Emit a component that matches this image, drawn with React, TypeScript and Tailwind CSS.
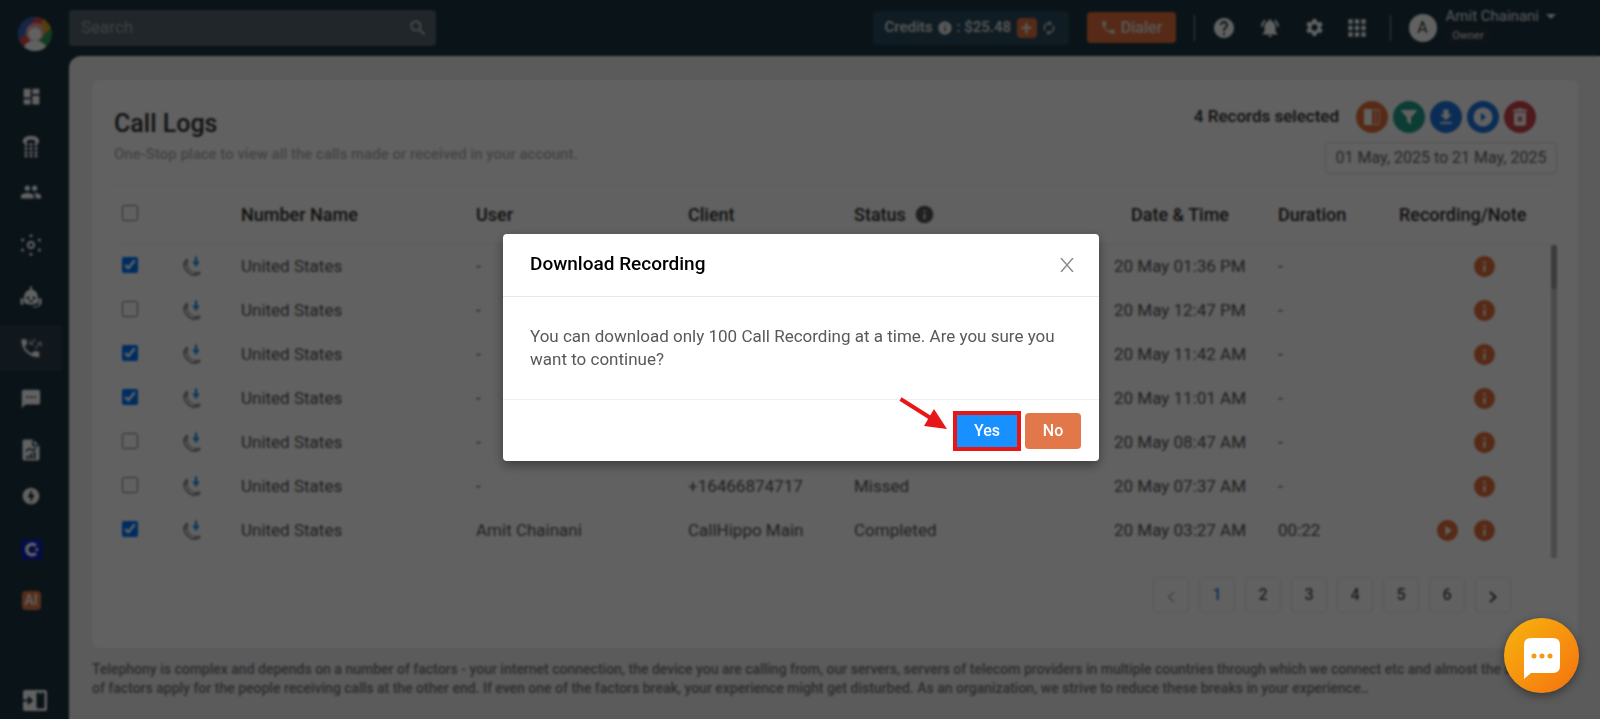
import { useState } from 'react';
import type { ReactNode } from 'react';
import {
  MdApps,
  MdArrowDropDown,
  MdAutorenew,
  MdDashboard,
  MdDownload,
  MdHelp,
  MdInfo,
  MdNotificationsActive,
  MdOfflineBolt,
  MdPeople,
  MdPhone,
  MdPlayCircleFilled,
  MdSearch,
  MdSettings,
  MdSms,
} from 'react-icons/md';

interface CallLog {
  id: number;
  user: string;
  client?: string;
  status: string;
  date: string;
  duration: string;
  recording?: boolean;
}

const LOGS: CallLog[] = [
  { id: 1, user: '-', status: 'Missed', date: '20 May 01:36 PM', duration: '-' },
  { id: 2, user: '-', client: '+16466874717', status: 'Missed', date: '20 May 12:47 PM', duration: '-' },
  { id: 3, user: '-', status: 'Missed', date: '20 May 11:42 AM', duration: '-' },
  { id: 4, user: '-', client: '+16466874717', status: 'Missed', date: '20 May 11:01 AM', duration: '-' },
  { id: 5, user: '-', client: '+16466874717', status: 'Missed', date: '20 May 08:47 AM', duration: '-' },
  { id: 6, user: '-', client: '+16466874717', status: 'Missed', date: '20 May 07:37 AM', duration: '-' },
  {
    id: 7,
    user: 'Amit Chainani',
    client: 'CallHippo Main',
    status: 'Completed',
    date: '20 May 03:27 AM',
    duration: '00:22',
    recording: true,
  },
];

function LogoIcon() {
  return (
    <svg width="34" height="34" viewBox="0 0 34 34">
      <defs>
        <clipPath id="logo-clip">
          <circle cx="17" cy="17" r="17" />
        </clipPath>
      </defs>
      <g clipPath="url(#logo-clip)">
        <rect width="34" height="34" fill="#2f9e58" />
        <path d="M0 0H19L8 14 6 18 0 24Z" fill="#3b62c4" />
        <path d="M18 -1L28 3 22 11 15 8 9 13Z" fill="#d94452" />
        <path d="M26 1L34 10 24 20 21 10Z" fill="#dfa21c" />
        <path d="M0 23L7 18 13 23 8 30 3 30Z" fill="#d94452" />
        <path d="M8 18C7 10 12 6 18 6S28 12 25 20L19 27H13Z" fill="#e9a7a3" />
        <path d="M13 22H22L20 26H14Z" fill="#e7c39b" />
        <circle cx="17" cy="17" r="6.5" fill="#fff" />
        <path d="M5 34C6 26 11 24 17 24S28 26 29 34Z" fill="#fff" />
      </g>
    </svg>
  );
}

function DialpadIcon() {
  const rows = [9.5, 13.5, 17.5, 21];
  return (
    <svg width="18" height="23" viewBox="0 0 18 23" fill="currentColor">
      <path d="M1 8C0 4 3 .8 9 .8S18 4 17 8H13V5.5C11 4.6 7 4.6 5 5.5V8Z" />
      {rows.map((y) => (
        <g key={y}>
          <circle cx="4" cy={y} r="1.6" />
          <circle cx="9" cy={y} r="1.6" />
          <circle cx="14" cy={y} r="1.6" />
        </g>
      ))}
    </svg>
  );
}

function HubIcon() {
  return (
    <svg width="22" height="22" viewBox="0 0 22 22" fill="currentColor">
      <circle cx="11" cy="11" r="3" fill="none" stroke="currentColor" strokeWidth="2" />
      <circle cx="11" cy="1.8" r="1.5" />
      <circle cx="11" cy="20.2" r="1.5" />
      <circle cx="2.6" cy="6" r="1.5" />
      <circle cx="19.4" cy="6" r="1.5" />
      <circle cx="2.6" cy="16" r="1.5" />
      <circle cx="19.4" cy="16" r="1.5" />
    </svg>
  );
}

function BotIcon() {
  return (
    <svg width="22" height="22" viewBox="0 0 22 22" fill="currentColor">
      <rect x="10" y="0" width="2" height="5" rx="1" />
      <path fillRule="evenodd" d="M11 3.5C15.500 3.500 18 7.500 18 12V15.500C18 17.500 15 18.500 11 18.500S4 17.500 4 15.500V12C4 7.500 6.500 3.500 11 3.500ZM8 10.500A1.400 1.400 0 1 0 8 13.300A1.400 1.400 0 1 0 8 10.500ZM14 10.500A1.400 1.400 0 1 0 14 13.300A1.400 1.400 0 1 0 14 10.500ZM8.500 15.200Q11 17 13.500 15.200V14.600H8.500Z" />
      <rect x="0.500" y="12" width="2.800" height="7" rx="1.400" />
      <rect x="18.700" y="12" width="2.800" height="7" rx="1.400" />
      <path d="M20 18Q19.500 21 13 21" fill="none" stroke="currentColor" strokeWidth="1.400" />
    </svg>
  );
}

function CallLogsIcon() {
  return (
    <svg width="21" height="20" viewBox="0 0 21 20" fill="currentColor">
      <path d="M3.600 8.600C5.100 11.600 7.700 14.100 10.800 15.600L13 13.300C13.300 13 13.700 12.900 14 13C15.200 13.400 16.400 13.600 17.600 13.600C18 13.600 18.300 13.900 18.300 14.300V18.400C18.300 18.800 18 19.200 17.600 19.200C8 19.200 0.300 11.400 0.300 1.900C0.300 1.500 0.600 1.200 1 1.200H4.900C5.400 1.200 5.700 1.500 5.700 1.900C5.700 3.100 5.900 4.300 6.200 5.400C6.300 5.800 6.200 6.100 6 6.300Z" />
      <path d="M14.500 1L9.500 6M9 2.500V6.500H13M14 10.500L19.500 5M16 4.500H20V8.500" fill="none" stroke="currentColor" strokeOpacity="0.700" strokeWidth="1.200" />
    </svg>
  );
}

function ReportIcon() {
  return (
    <svg width="18" height="22" viewBox="0 0 18 22">
      <path d="M2 .5H11L17.500 6.500V19.500Q17.500 21.500 15.500 21.500H2.500Q.5 21.500 .5 19.500V2Q.5 .5 2 .5Z" fill="currentColor" />
      <path d="M11 1V6.500H17" fill="none" stroke="#1a3340" strokeWidth="1.500" />
      <path d="M4 12.500Q7 8.500 9 10.500T14 8.500" fill="none" stroke="#1a3340" strokeWidth="1.500" />
      <path d="M5.500 20V16.500M9 20V14.500M12.500 20V12.500" stroke="#1a3340" strokeWidth="2" />
    </svg>
  );
}

function CopilotIcon() {
  return (
    <svg width="21" height="21" viewBox="0 0 21 21">
      <rect width="21" height="21" rx="3" fill="#0b1fc0" />
      <path d="M14.800 6.700A5.300 5.300 0 1 0 14.800 14.300" fill="none" stroke="#fff" strokeWidth="3.600" />
      <path d="M17 8.300L13.500 10.500 17 12.700Z" fill="#fff" />
    </svg>
  );
}

function ExpandIcon() {
  return (
    <svg width="24" height="21" viewBox="0 0 24 21">
      <rect x="0" y="0" width="24" height="21" rx="2" fill="currentColor" />
      <rect x="13.500" y="2.500" width="8" height="16" rx="1" fill="#1a3340" />
      <path d="M0 10.500H8M5 7L8.500 10.500 5 14" fill="none" stroke="#1a3340" strokeWidth="2.200" />
      <path d="M16 2.500H19L17.500 4.500Z" fill="currentColor" />
    </svg>
  );
}

function IncomingCallIcon() {
  return (
    <svg width="20" height="21" viewBox="0 0 20 21" fill="none">
      <path d="M2 6.500C1.500 13 7 19.300 13.500 19.300" stroke="#909090" strokeWidth="1.800" />
      <path d="M4.600 4.600L3.800 7.600M13.500 18L16.700 17.200" stroke="#909090" strokeWidth="3.600" strokeLinecap="round" />
      <path d="M5 8.500C5.700 12.300 8.500 15.500 12.300 16.600" stroke="#909090" strokeWidth="1.300" />
      <path d="M14 .5V7" stroke="#1890e8" strokeWidth="2.200" />
      <path d="M10.300 5.500H17.700L14 11Z" fill="#1890e8" />
    </svg>
  );
}

function ColumnsIcon() {
  return (
    <svg width="16" height="16" viewBox="0 0 16 16">
      <rect x="0" y="0" width="8" height="16" rx="1" fill="#fff" />
      <path d="M8 .7H15.300V15.300H8M11.500 1V15" fill="none" stroke="#fff" strokeOpacity="0.600" strokeWidth="1.200" />
    </svg>
  );
}

function FunnelIcon() {
  return (
    <svg width="16" height="16" viewBox="0 0 16 16" fill="#fff">
      <path d="M.3 1H15.700V2.300L10 8.500V15.500L6 12.500V8.500L.3 2.300Z" />
    </svg>
  );
}

function PlayRingIcon() {
  return (
    <svg width="20" height="20" viewBox="0 0 20 20">
      <circle cx="10" cy="10" r="9.500" fill="#fff" />
      <path d="M8 5.800L13 10 8 14.200Z" fill="#1f75e0" />
    </svg>
  );
}

function DeleteIcon() {
  return (
    <svg width="14" height="18" viewBox="0 0 14 18">
      <path d="M0 1.500H4L5 .3H9L10 1.500H14V3.500H0ZM1 4.500H13V16Q13 17.700 11.300 17.700H2.700Q1 17.700 1 16Z" fill="#fff" />
      <path d="M4.800 8.500L9.200 13.500M9.200 8.500L4.800 13.500" stroke="#cf444a" strokeWidth="1.600" />
    </svg>
  );
}

const NAV_ITEMS: { label: string; icon: ReactNode; className: string; active?: boolean }[] = [
  { label: 'Dashboard', icon: <MdDashboard size={21} />, className: '' },
  { label: 'Numbers', icon: <DialpadIcon />, className: 'mt-1' },
  { label: 'Teams', icon: <MdPeople size={22} />, className: '' },
  { label: 'Integrations', icon: <HubIcon />, className: 'mt-[7px]' },
  { label: 'Voice bot', icon: <BotIcon />, className: 'mt-[6px]' },
  { label: 'Call logs', icon: <CallLogsIcon />, className: 'mt-[5px]', active: true },
  { label: 'Messages', icon: <MdSms size={22} />, className: 'mt-[5px]' },
  { label: 'Reports', icon: <ReportIcon />, className: 'mt-[5px]' },
  { label: 'Power dialer', icon: <MdOfflineBolt size={20} />, className: '' },
  { label: 'Copilot', icon: <CopilotIcon />, className: 'mt-[7px]' },
  {
    label: 'AI assistant',
    icon: <span className="w-[19px] h-[19px] rounded-sm bg-[#e2794a] text-sm leading-[19px] text-center font-medium">AI</span>,
    className: 'mt-[5px]',
  },
];

function Sidebar() {
  return (
    <aside className="w-[69px] shrink-0 flex flex-col text-white">
      <a href="#" aria-label="Home" className="mt-[17px] ml-[18px] w-[34px]">
        <LogoIcon />
      </a>
      <nav className="mt-[22px] flex flex-col">
        {NAV_ITEMS.map((item) => (
          <a
            key={item.label}
            href="#"
            aria-label={item.label}
            className={`w-[62px] h-[46px] flex items-center justify-center ${item.className} ${
              item.active ? 'bg-[#2f3f4e]' : ''
            }`}
          >
            {item.icon}
          </a>
        ))}
      </nav>
      <button aria-label="Expand menu" className="mt-auto mb-2 ml-[23px] w-6">
        <ExpandIcon />
      </button>
    </aside>
  );
}

function Header() {
  return (
    <header className="h-14 shrink-0 flex items-center text-white pr-[45px] pb-px">
      <label className="w-[367px] h-9 flex items-center bg-[#56646c] rounded pl-3 pr-2">
        <input
          type="text"
          placeholder="Search"
          aria-label="Search"
          className="flex-1 min-w-0 bg-transparent outline-none text-[17px] placeholder:text-[#a3abb0]"
        />
        <MdSearch size={20} className="text-[#d0d0d0]" />
      </label>

      <div className="ml-auto flex items-center gap-1 h-[34px] w-[196px] px-3 rounded bg-[#2a4a5c] text-[15px] font-medium text-[#e6e6e6]">
        Credits
        <MdInfo size={16} />
        <span className="flex-1">: $25.48</span>
        <button aria-label="Add credits" className="w-5 h-5 rounded bg-[#e2703c] text-xl leading-5">
          +
        </button>
        <button aria-label="Refresh credits">
          <MdAutorenew size={16} />
        </button>
      </div>
      <button className="ml-[18px] w-[89px] h-[31px] flex items-center justify-center gap-1 rounded bg-[#e2703c] text-base font-medium text-[#e6e6e6]">
        <MdPhone size={17} />
        Dialer
      </button>
      <div className="ml-[18px] mr-[17px] w-px h-[26px] bg-[#9aa4ab]" />
      <div className="flex items-center gap-[23px]">
        <button aria-label="Help">
          <MdHelp size={24} />
        </button>
        <button aria-label="Notifications">
          <MdNotificationsActive size={22} />
        </button>
        <button aria-label="Settings">
          <MdSettings size={21} />
        </button>
        <button aria-label="Apps" className="-ml-1">
          <MdApps size={26} />
        </button>
      </div>
      <div className="ml-5 mr-[18px] w-px h-[26px] bg-[#9aa4ab]" />
      <div className="w-7 h-7 rounded-full bg-white text-[#333] text-base leading-7 text-center">A</div>
      <div className="ml-[9px] pb-1">
        <button className="flex items-center text-[15px] leading-5 text-[#e6e6e6]">
          Amit Chainani
          <MdArrowDropDown size={24} className="-my-1 -mr-2" />
        </button>
        <span className="block w-[45px] h-5 rounded bg-[#26343e] text-[11px] leading-5 text-center font-medium text-[#c4c4c4]">
          Owner
        </span>
      </div>
    </header>
  );
}

function CallLogTable() {
  const [selected, setSelected] = useState<number[]>([1, 3, 4, 7]);

  const toggle = (id: number) =>
    setSelected(selected.includes(id) ? selected.filter((s) => s !== id) : [...selected, id]);

  return (
    <div className="flex">
      <table className="flex-1 self-start mb-[5px] table-fixed text-[17px] text-[#555] text-left border-t border-[#f0f0f0]">
        <colgroup>
          <col className="w-[68px]" />
          <col className="w-[59px]" />
          <col className="w-[235px]" />
          <col className="w-[212px]" />
          <col className="w-[166px]" />
          <col />
          <col className="w-[164px]" />
          <col className="w-[121px]" />
          <col className="w-[152px]" />
        </colgroup>
        <thead>
          <tr className="h-[60px] border-b border-[#f0f0f0] text-[#2d2d2d] text-lg">
            <th className="pl-2">
              <input type="checkbox" aria-label="Select all" className="block w-4 h-4 mb-1" />
            </th>
            <th />
            <th className="font-medium">Number Name</th>
            <th className="font-medium">User</th>
            <th className="font-medium">Client</th>
            <th className="font-medium">
              <span className="flex items-center gap-2">
                Status
                <MdInfo size={21} className="text-[#555]" />
              </span>
            </th>
            <th className="font-medium text-center pr-8">Date &amp; Time</th>
            <th className="font-medium">Duration</th>
            <th className="font-medium whitespace-nowrap">Recording/Note</th>
          </tr>
        </thead>
        <tbody>
          {LOGS.map((log) => (
            <tr key={log.id} className="h-11">
              <td className="pl-2">
                <input
                  type="checkbox"
                  aria-label={`Select call of ${log.date}`}
                  checked={selected.includes(log.id)}
                  onChange={() => toggle(log.id)}
                  className="block w-4 h-4 mb-1"
                />
              </td>
              <td>
                <IncomingCallIcon />
              </td>
              <td>United States</td>
              <td>{log.user}</td>
              <td>{log.client}</td>
              <td>{log.status}</td>
              <td className="whitespace-nowrap">{log.date}</td>
              <td>{log.duration}</td>
              <td>
                <div className="flex justify-end gap-3 pr-[54px] text-[#e2703c]">
                  {log.recording && (
                    <button aria-label="Play recording">
                      <MdPlayCircleFilled size={25} />
                    </button>
                  )}
                  <button aria-label="Call details">
                    <MdInfo size={25} />
                  </button>
                </div>
              </td>
            </tr>
          ))}
        </tbody>
      </table>
      <div className="mt-[61px] w-[6px] bg-[#c4c4c4]">
        <div className="h-11 rounded-sm bg-[#9c9c9c]" />
      </div>
    </div>
  );
}

function Pagination() {
  const pages = [1, 2, 3, 4, 5, 6];
  const box = 'w-9 h-9 rounded border border-[#e4e4e4] flex items-center justify-center text-base font-medium';

  return (
    <nav aria-label="Pages" className="flex justify-end gap-[10px] mt-[19px] pr-[46px]">
      <button aria-label="Previous page" className={`${box} pt-1 text-[#b0b0b0]`}>
        <svg width="8" height="12" viewBox="0 0 8 12" fill="none" stroke="currentColor" strokeWidth="1.500">
          <path d="M7 1L1.500 6 7 11" />
        </svg>
      </button>
      {pages.map((page) => (
        <button key={page} className={`${box} ${page === 1 ? 'text-[#2a78e0]' : 'text-[#555]'}`}>
          {page}
        </button>
      ))}
      <button aria-label="Next page" className={`${box} pt-1 text-[#444]`}>
        <svg width="8" height="12" viewBox="0 0 8 12" fill="none" stroke="currentColor" strokeWidth="2">
          <path d="M1 1L6.500 6 1 11" />
        </svg>
      </button>
    </nav>
  );
}

function CallLogs() {
  const action = 'w-8 h-8 rounded-full flex items-center justify-center';

  return (
    <section className="bg-white rounded-md pl-[22px] pr-[21px] pb-[35px]">
      <div className="h-[104px] flex justify-between">
        <div className="pt-[28px]">
          <h1 className="text-[25px] leading-8 font-medium text-[#333]">Call Logs</h1>
          <p className="text-[15px] leading-7 font-medium text-[#b4b4b4]">
            One-Stop place to view all the calls made or received in your account.
          </p>
        </div>
        <div className="pt-[21px] flex flex-col items-end">
          <div className="flex items-center gap-[5px] pr-[21px]">
            <span className="mr-3 text-[17px] font-medium text-[#2d2d2d]">4 Records selected</span>
            <button aria-label="Columns" className={`${action} bg-[#e2703c]`}>
              <ColumnsIcon />
            </button>
            <button aria-label="Filter" className={`${action} bg-[#1fa08a]`}>
              <FunnelIcon />
            </button>
            <button aria-label="Download" className={`${action} bg-[#1f75e0] text-white`}>
              <MdDownload size={20} />
            </button>
            <button aria-label="Download recordings" className={`${action} bg-[#1f75e0]`}>
              <PlayRingIcon />
            </button>
            <button aria-label="Delete" className={`${action} bg-[#cf444a]`}>
              <DeleteIcon />
            </button>
          </div>
          <button className="mt-[9px] h-8 w-[232px] border border-[#d5d5d5] rounded text-base text-[#666] whitespace-nowrap">
            01 May, 2025 to 21 May, 2025
          </button>
        </div>
      </div>
      <CallLogTable />
      <Pagination />
    </section>
  );
}

function DownloadModal() {
  return (
    <div className="fixed inset-0 z-10 flex items-start justify-center pt-[234px] pl-[18px] pr-4 bg-black/62 backdrop-blur-[1px]">
      <div role="dialog" aria-labelledby="modal-title" className="relative w-[596px] bg-white rounded shadow-[0_4px_12px_rgba(0,0,0,0.4)]">
        <div className="h-[63px] flex items-center justify-between pl-[27px] pr-[25px] pb-px border-b border-[#e8e8e8]">
          <h2 id="modal-title" className="text-[19px] font-medium text-black">
            Download Recording
          </h2>
          <button aria-label="Close" className="text-[#8c8c8c]">
            <svg width="14" height="14" viewBox="0 0 14 14" fill="none" stroke="currentColor" strokeWidth="1.500">
              <path d="M1 0L13 14M13 0L1 14" />
            </svg>
          </button>
        </div>
        <p className="px-[27px] pt-[28px] pb-[28px] text-[17px] leading-[23px] text-[#595959]">
          You can download only 100 Call Recording at a time. Are you sure you
          <br />
          want to continue?
        </p>
        <div className="flex items-center justify-end gap-1 pt-[11px] pb-[10px] pr-[18px] border-t border-[#f0f0f0] text-base font-medium text-white">
          <button className="w-[68px] h-10 bg-[#1890ff] border-4 border-[#e81717]">Yes</button>
          <button className="w-14 h-9 rounded bg-[#e2784a]">No</button>
        </div>
        <svg width="50" height="34" viewBox="0 0 50 34" className="absolute right-[150px] bottom-[30px]" aria-hidden="true">
          <path d="M1.500 2L34 22.500" stroke="#e81717" strokeWidth="4" />
          <path d="M35 12L48 32 25 29Z" fill="#e81717" />
        </svg>
      </div>
    </div>
  );
}

function ChatButton() {
  return (
    <button
      aria-label="Open chat"
      className="fixed z-20 right-[21px] bottom-[26px] w-[75px] h-[75px] rounded-full flex items-center justify-center bg-linear-to-br from-[#f6b40e] to-[#f4700f] shadow-[0_3px_10px_rgba(0,0,0,0.4)]"
    >
      <svg width="36" height="42" viewBox="0 0 36 42" className="mt-[7px]">
        <path d="M7 0H29Q36 0 36 7V28Q36 35 29 35H7L0 41V7Q0 0 7 0Z" fill="#fff" />
        <circle cx="10" cy="18" r="2.500" fill="#f39a10" />
        <circle cx="18" cy="18" r="2.500" fill="#f39a10" />
        <circle cx="26" cy="18" r="2.500" fill="#f39a10" />
      </svg>
    </button>
  );
}

export default function App() {
  return (
    <div className="min-h-screen flex bg-[#1a3340] font-['Roboto',sans-serif]">
      <Sidebar />
      <div className="flex-1 min-w-0 flex flex-col">
        <Header />
        <main className="flex-1 bg-[#eeeef2] rounded-tl-xl pt-6 pl-[23px] pr-[22px]">
          <CallLogs />
          <p className="mt-3 text-sm leading-[19px] font-medium text-[#777]">
            Telephony is complex and depends on a number of factors - your internet connection, the device you are
            calling from, our servers, servers of telecom providers in multiple countries through which we connect etc
            and almost the same set
            <br />
            of factors apply for the people receiving calls at the other end. If even one of the factors break, your
            experience might get disturbed. As an organization, we strive to reduce these breaks in your experience..
          </p>
        </main>
      </div>
      <DownloadModal />
      <ChatButton />
    </div>
  );
}
